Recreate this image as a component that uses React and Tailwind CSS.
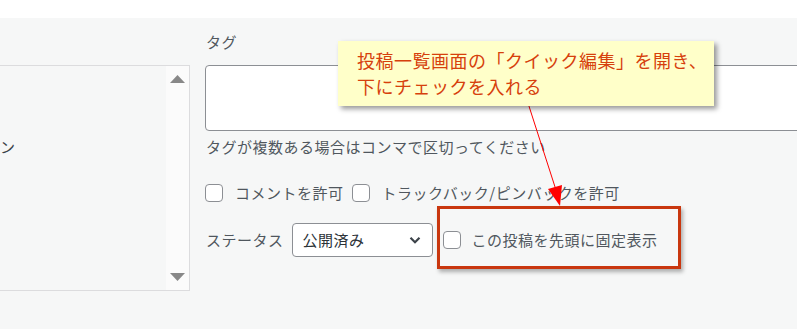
export default function App() {
  const font = { fontFamily: '"Noto Sans CJK JP", "Noto Sans", sans-serif' };

  return (
    <div className="relative w-[797px] h-[329px] overflow-hidden bg-[#f6f7f7]" style={font}>
      {/* top white strip */}
      <div className="h-[18px] bg-white" />

      <div className="flex">
        {/* category list box */}
        <div className="w-[190px] shrink-0 pt-[47px]">
          <div className="flex h-[226px] border-y border-r border-[#dcdcde]">
            <div className="flex-1 pt-[70px] text-[15px] leading-[22px] text-[#3c434a]">
              <span>ン</span>
            </div>
            <div className="w-[23px] bg-[#fbfbfb] flex flex-col items-center justify-between py-[9px]">
              <svg width="15" height="8" viewBox="0 0 15 8">
                <polygon points="7.5,0 15,8 0,8" fill="#888" />
              </svg>
              <svg width="15" height="8" viewBox="0 0 15 8">
                <polygon points="0,0 15,0 7.5,8" fill="#888" />
              </svg>
            </div>
          </div>
        </div>

        {/* right column */}
        <div className="ml-[15px] flex-1 text-[15px] tracking-[0.5px] text-[#50575e]">
          <div className="mt-[13px] h-[22px] leading-[22px] pl-[1px]">タグ</div>
          <div className="mt-[12px] h-[66px] w-[620px] bg-white border border-[#8c8f94] rounded-[4px]" />
          <div className="mt-[5px] leading-[22px] pl-[1px]">タグが複数ある場合はコンマで区切ってください</div>

          <div className="mt-[24px] h-[22px] flex items-center">
            <span className="w-[18px] h-[18px] bg-white border border-[#8c8f94] rounded-[4px]" />
            <span className="ml-[12px] leading-[22px]">コメントを許可</span>
            <span className="ml-[8px] w-[18px] h-[18px] bg-white border border-[#8c8f94] rounded-[4px]" />
            <span className="ml-[12px] leading-[22px]">トラックバック/ピンバックを許可</span>
          </div>

          <div className="mt-[19px] h-[34px] flex items-center">
            <span className="pl-[1px] leading-[22px]">ステータス</span>
            <div className="ml-[8px] w-[141px] h-[34px] bg-white border border-[#8c8f94] rounded-[4px] flex items-center justify-between pl-[10px] pr-[8px] text-[#2c3338]">
              <span>公開済み</span>
              <svg width="18" height="18" viewBox="0 0 20 20">
                <path d="M5 7.5 L10 12.5 L15 7.5" fill="none" stroke="#3c434a" strokeWidth="2.4" />
              </svg>
            </div>
            <span className="ml-[10px] w-[18px] h-[18px] bg-white border border-[#8c8f94] rounded-[4px]" />
            <span className="ml-[11px] leading-[22px]">この投稿を先頭に固定表示</span>
          </div>
        </div>
      </div>

      {/* annotation: red highlight rectangle */}
      <div className="absolute left-[437px] top-[206px] w-[244px] h-[63px] border-[3px] border-[#c9370f] shadow-[2px_3px_4px_rgba(0,0,0,0.3)]" />

      {/* annotation: arrow */}
      <svg className="absolute left-0 top-0 pointer-events-none" width="797" height="329">
        <line x1="527" y1="100" x2="556" y2="190" stroke="#ff0000" strokeWidth="1" />
        <polygon points="560,206 548,189 562,185" fill="#ff0000" />
      </svg>

      {/* annotation: callout */}
      <div className="absolute left-[338px] top-[41px] w-[376px] h-[65px] bg-[#ffffc9] shadow-[3px_3px_5px_rgba(0,0,0,0.4)] pl-[19px] pt-[6px] text-[18px] leading-[26px] tracking-[0.5px] text-[#d6400c]">
        <div>投稿一覧画面の「クイック編集」を開き、</div>
        <div>下にチェックを入れる</div>
      </div>
    </div>
  );
}
